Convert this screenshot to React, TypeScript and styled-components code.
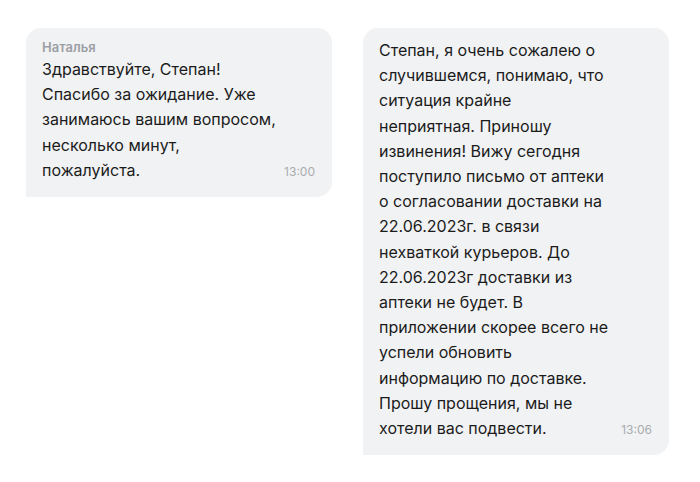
import React from "react";
import styled, { createGlobalStyle } from "styled-components";

const Global = createGlobalStyle`
  html, body { margin: 0; padding: 0; background: #ffffff; }
  body { font-family: Inter, "Noto Sans", sans-serif; }
`;

const Page = styled.div`
  width: 700px;
  height: 482px;
  box-sizing: border-box;
  padding: 28px 0 0 26px;
  display: flex;
  align-items: flex-start;
  gap: 31px;
`;

const Bubble = styled.div<{ $tail: "left" }>`
  width: 306px;
  box-sizing: border-box;
  background: #f1f2f4;
  border-radius: 15px 15px 15px 0;
  padding: 10px 17px 13px 16px;
  display: flex;
  flex-direction: column;
`;

const Author = styled.div`
  font-size: 13px;
  line-height: 18px;
  font-weight: 600;
  color: #9c9ea3;
  margin-bottom: 1px;
`;

const Body = styled.div`
  font-size: 16px;
  line-height: 25.2px;
  color: #1b1b1b;
  white-space: pre-line;
`;

const LastRow = styled.div`
  display: flex;
  align-items: baseline;
  justify-content: space-between;
  font-size: 16px;
  line-height: 25.2px;
  color: #1b1b1b;
`;

const Time = styled.span`
  font-size: 12px;
  color: #a9abaf;
`;

type MessageProps = { author?: string; lines: string[]; time: string };

function Message({ author, lines, time }: MessageProps) {
  const head = lines.slice(0, -1).join("\n");
  const last = lines[lines.length - 1];
  return (
    <Bubble $tail="left">
      {author && <Author>{author}</Author>}
      <Body>{head}</Body>
      <LastRow>
        <span>{last}</span>
        <Time>{time}</Time>
      </LastRow>
    </Bubble>
  );
}

export default function App() {
  return (
    <>
      <Global />
      <Page>
        <Message
          author="Наталья"
          time="13:00"
          lines={[
            "Здравствуйте, Степан!",
            "Спасибо за ожидание. Уже",
            "занимаюсь вашим вопросом,",
            "несколько минут,",
            "пожалуйста.",
          ]}
        />
        <Message
          time="13:06"
          lines={[
            "Степан, я очень сожалею о",
            "случившемся, понимаю, что",
            "ситуация крайне",
            "неприятная. Приношу",
            "извинения! Вижу сегодня",
            "поступило письмо от аптеки",
            "о согласовании доставки на",
            "22.06.2023г. в связи",
            "нехваткой курьеров. До",
            "22.06.2023г доставки из",
            "аптеки не будет. В",
            "приложении скорее всего не",
            "успели обновить",
            "информацию по доставке.",
            "Прошу прощения, мы не",
            "хотели вас подвести.",
          ]}
        />
      </Page>
    </>
  );
}
